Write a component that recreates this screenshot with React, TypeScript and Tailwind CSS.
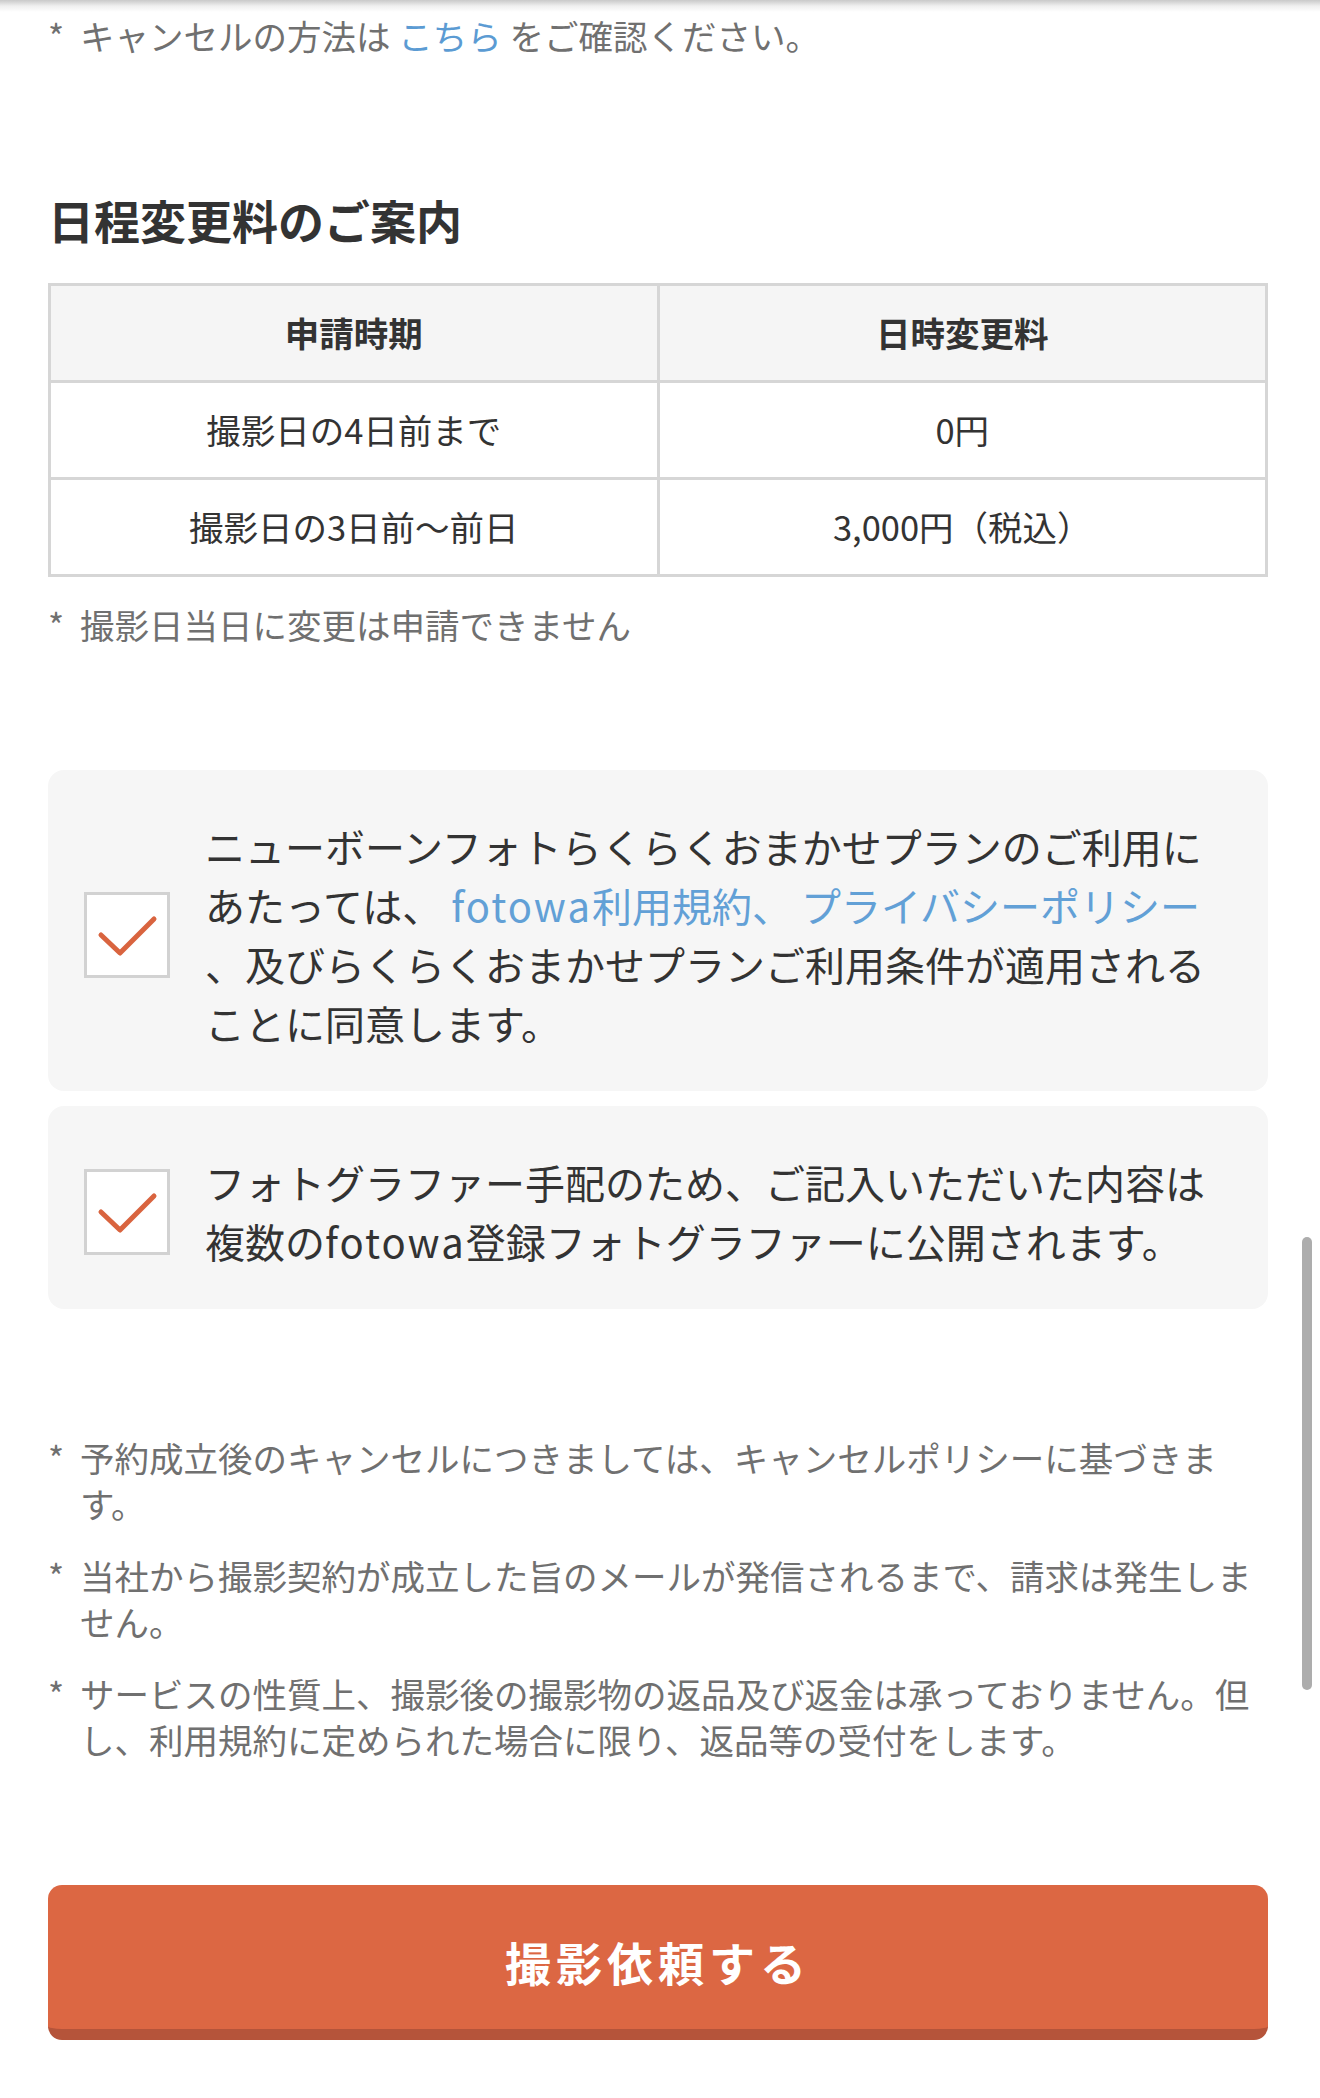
const font = "font-['Noto_Sans_CJK_JP','Noto_Sans',sans-serif]"

function Note({ children }: { children: React.ReactNode }) {
  return (
    <div className="flex text-[34.5px] leading-[46px] text-[#707070]">
      <span className="w-[32px] shrink-0">*</span>
      <div className="flex-1">{children}</div>
    </div>
  )
}

function CheckBox() {
  return (
    <div className="w-[86px] h-[86px] shrink-0 border-[3px] border-[#d2d2d2] bg-white flex items-center justify-center">
      <svg width="80" height="80" viewBox="0 0 80 80" fill="none">
        <path
          d="M14 40 L33 58 L67 24"
          stroke="#d9643f"
          strokeWidth="5"
          strokeLinecap="round"
          strokeLinejoin="round"
        />
      </svg>
    </div>
  )
}

function Agreement({ children }: { children: React.ReactNode }) {
  return (
    <div className="flex items-center gap-[35px] rounded-[16px] bg-[#f6f6f6] pl-[36px] pt-[47px] pb-[38px]">
      <CheckBox />
      <p className="whitespace-nowrap text-[40px] leading-[59px] text-[#333333]">{children}</p>
    </div>
  )
}

const rows = [
  ["撮影日の4日前まで", "0円"],
  ["撮影日の3日前〜前日", "3,000円（税込）"],
]

export default function App() {
  return (
    <div className={`relative w-[1320px] h-[2098px] overflow-hidden bg-white ${font}`}>
      <div className="h-[12px] bg-linear-to-b from-[#c9c9c9] via-[#efefef] to-white" />

      <div className="pl-[48px] w-[1268px]">
        <Note>
          キャンセルの方法は <span className="text-[#5b9bd3]">こちら</span> をご確認ください。
        </Note>

        <h2 className="mt-[129px] text-[46px] leading-[64px] font-bold text-[#333333]">日程変更料のご案内</h2>

        <table className="mt-[32px] w-full border-collapse border-[3px] border-[#d6d6d6] text-[34.5px] text-[#333333]">
          <thead>
            <tr className="bg-[#f5f5f5]">
              <th className="w-1/2 h-[97px] border-[3px] border-[#d6d6d6] font-bold">申請時期</th>
              <th className="w-1/2 h-[97px] border-[3px] border-[#d6d6d6] font-bold">日時変更料</th>
            </tr>
          </thead>
          <tbody>
            {rows.map(([when, fee]) => (
              <tr key={when}>
                <td className="h-[97px] border-[3px] border-[#d6d6d6] text-center">{when}</td>
                <td className="h-[97px] border-[3px] border-[#d6d6d6] text-center">{fee}</td>
              </tr>
            ))}
          </tbody>
        </table>

        <div className="mt-[24px]">
          <Note>撮影日当日に変更は申請できません</Note>
        </div>

        <div className="mt-[123px] flex flex-col gap-[15px]">
          <Agreement>
            ニューボーンフォトらくらくおまかせプランのご利用に
            <br />
            あたっては、{" "}
            <span className="text-[#62a0d6]">
              <span className="tracking-[2px]">fotowa</span>利用規約、
            </span>{" "}
            <span className="text-[#62a0d6]">プライバシーポリシー</span>
            <br />
            、及びらくらくおまかせプランご利用条件が適用される
            <br />
            ことに同意します。
          </Agreement>
          <Agreement>
            フォトグラファー手配のため、ご記入いただいた内容は
            <br />
            複数の<span className="tracking-[2px]">fotowa</span>登録フォトグラファーに公開されます。
          </Agreement>
        </div>

        <div className="mt-[125px] flex flex-col gap-[26px]">
          <Note>予約成立後のキャンセルにつきましては、キャンセルポリシーに基づきます。</Note>
          <Note>当社から撮影契約が成立した旨のメールが発信されるまで、請求は発生しません。</Note>
          <Note>
            サービスの性質上、撮影後の撮影物の返品及び返金は承っておりません。但し、利用規約に定められた場合に限り、返品等の受付をします。
          </Note>
        </div>

        <button className="mt-[123px] w-full h-[155px] rounded-[14px] bg-[#dc6743] border-b-[11px] border-[#b5543a] pt-[8px] text-[46px] font-bold tracking-[5px] text-white">
          撮影依頼する
        </button>
      </div>

      <div className="absolute left-[1302px] top-[1237px] w-[10px] h-[453px] rounded-full bg-[#adadad]" />
    </div>
  )
}
